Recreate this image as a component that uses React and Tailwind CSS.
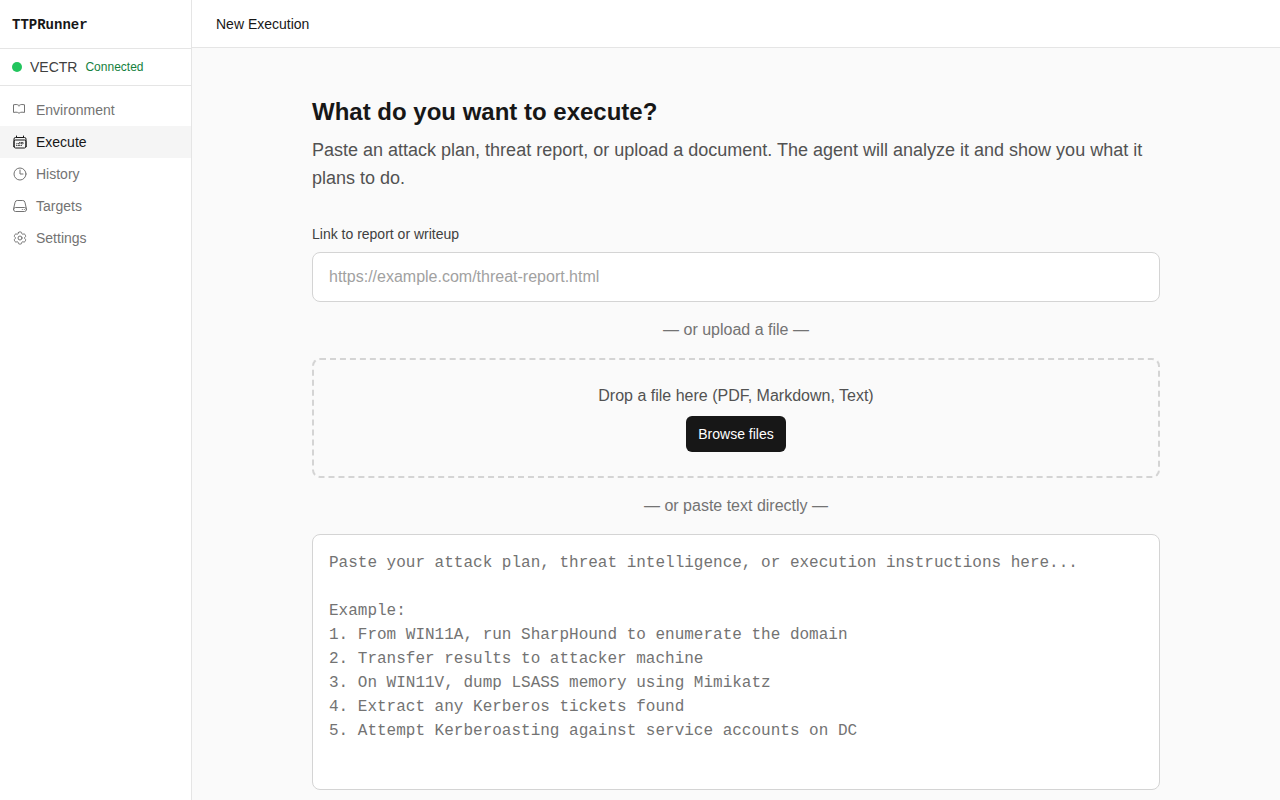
import React, { useRef, useState } from 'react';
import { HiOutlineCalendarDays, HiOutlineClock, HiOutlineServer, HiOutlineCog6Tooth } from 'react-icons/hi2';

const BookIcon = ({ className }) => (
  <svg className={className} viewBox="0 0 24 24" fill="none" stroke="currentColor" strokeWidth="1.5" strokeLinecap="round" strokeLinejoin="round">
    <path d="M10.5 5.4C9.3 4.2 7.8 3.75 6 3.75c-1.3 0-2.6.1-3.75.4v11.5c1.15-.3 2.45-.4 3.75-.4 1.8 0 3.3.5 4.5 1.6 1.2-1.1 2.7-1.6 4.5-1.6 1.3 0 2.6.1 3.75.4V4.15c-1.15-.3-2.45-.4-3.75-.4-1.8 0-3.3.45-4.5 1.65z" />
  </svg>
);

const navItems = [
  { id: "environment", label: "Environment", icon: BookIcon },
  { id: "execute", label: "Execute", icon: HiOutlineCalendarDays },
  { id: "history", label: "History", icon: HiOutlineClock },
  { id: "targets", label: "Targets", icon: HiOutlineServer },
  { id: "settings", label: "Settings", icon: HiOutlineCog6Tooth },
];

const planPlaceholder = `Paste your attack plan, threat intelligence, or execution instructions here...

Example:
1. From WIN11A, run SharpHound to enumerate the domain
2. Transfer results to attacker machine
3. On WIN11V, dump LSASS memory using Mimikatz
4. Extract any Kerberos tickets found
5. Attempt Kerberoasting against service accounts on DC`;

function Sidebar({ active, setActive }) {
  return (
    <aside className="w-48 shrink-0 border-r border-neutral-200 bg-white">
      <div className="border-b border-neutral-200 p-3">
        <span className="font-['Liberation_Mono',monospace] text-sm font-bold text-neutral-900">TTPRunner</span>
      </div>
      <div className="flex items-center gap-2 border-b border-neutral-200 px-3 py-2">
        <span className="size-2.5 rounded-full bg-[#22c55e]" />
        <span className="text-sm text-neutral-700">VECTR</span>
        <span className="text-xs text-[#15803d]">Connected</span>
      </div>
      <nav className="py-2">
        {navItems.map(({ id, label, icon: Icon }) => (
          <a
            key={id}
            href={`#${id}`}
            onClick={() => setActive(id)}
            className={`flex items-center gap-2 px-3 py-1.5 text-sm ${active === id ? "bg-neutral-100 text-neutral-900" : "text-neutral-500 hover:bg-neutral-50"}`}
          >
            <Icon className="size-4" />
            {label}
          </a>
        ))}
      </nav>
    </aside>
  );
}

export default function App() {
  const [active, setActive] = useState("execute");
  const [link, setLink] = useState("");
  const [plan, setPlan] = useState("");
  const fileRef = useRef(null);

  const readFile = (file) => {
    if (!file) return;
    file.text().then(setPlan);
  };

  const handleDrop = (e) => {
    e.preventDefault();
    readFile(e.dataTransfer.files[0]);
  };

  return (
    <div className="flex h-screen bg-neutral-50 font-['Liberation_Sans',Arial,sans-serif] text-neutral-900">
      <Sidebar active={active} setActive={setActive} />
      <div className="flex min-w-0 flex-1 flex-col">
        <header className="flex h-12 shrink-0 items-center border-b border-neutral-200 bg-white px-6 text-sm">
          New Execution
        </header>
        <main className="flex-1 overflow-y-auto">
          <div className="mx-auto max-w-4xl px-6 py-12">
            <h1 className="text-2xl font-bold">What do you want to execute?</h1>
            <p className="mt-2 text-lg/7 text-neutral-600">
              Paste an attack plan, threat report, or upload a document. The agent will analyze it and show you what it plans to do.
            </p>

            <form className="mt-8 flex flex-col gap-4" onSubmit={(e) => e.preventDefault()}>
              <div>
                <label htmlFor="link" className="block text-sm text-neutral-700">Link to report or writeup</label>
                <input
                  id="link"
                  type="url"
                  value={link}
                  onChange={(e) => setLink(e.target.value)}
                  placeholder="https://example.com/threat-report.html"
                  className="mt-2 w-full rounded-lg border border-neutral-300 bg-white px-4 py-3 placeholder:text-neutral-400"
                />
              </div>

              <p className="text-center text-neutral-500">— or upload a file —</p>

              <div
                onDragOver={(e) => e.preventDefault()}
                onDrop={handleDrop}
                className="flex flex-col items-center gap-2 rounded-lg border-2 border-dashed border-neutral-300 p-6"
              >
                <p className="text-neutral-600">Drop a file here (PDF, Markdown, Text)</p>
                <input
                  ref={fileRef}
                  type="file"
                  accept=".pdf,.md,.txt"
                  aria-label="Upload a file"
                  onChange={(e) => readFile(e.target.files[0])}
                  className="hidden"
                />
                <button
                  type="button"
                  onClick={() => fileRef.current.click()}
                  className="rounded-md bg-neutral-900 px-3 py-2 text-sm text-white hover:bg-neutral-800"
                >
                  Browse files
                </button>
              </div>

              <p className="text-center text-neutral-500">— or paste text directly —</p>

              <textarea
                aria-label="Attack plan"
                value={plan}
                onChange={(e) => setPlan(e.target.value)}
                placeholder={planPlaceholder}
                className="block h-64 w-full resize-none rounded-lg border border-neutral-300 bg-white p-4 font-['Liberation_Mono',monospace] text-base placeholder:text-neutral-500"
              />
            </form>
          </div>
        </main>
      </div>
    </div>
  );
}
